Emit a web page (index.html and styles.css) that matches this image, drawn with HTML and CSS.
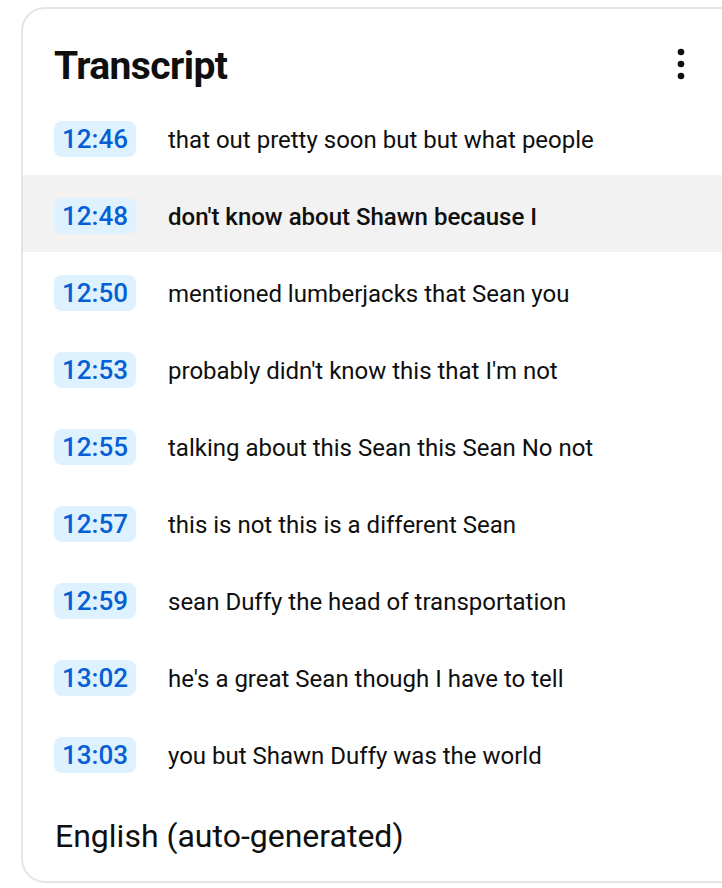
FILE: index.html
```html
<!DOCTYPE html>
<html lang="en">
<head>
    <meta charset="UTF-8">
    <meta name="viewport" content="width=device-width, initial-scale=1.0">
    <link rel="stylesheet" href="styles.css">
    <title>Transcript</title>
</head>
<body>
    <div class="panel">
        <div class="panel-header">
            <h1>Transcript</h1>
            <button class="menu-btn" aria-label="More actions">
                <svg width="12" height="36" viewBox="0 0 12 36">
                    <circle cx="6" cy="6" r="3.3" fill="#0f0f0f"/>
                    <circle cx="6" cy="18" r="3.3" fill="#0f0f0f"/>
                    <circle cx="6" cy="30" r="3.3" fill="#0f0f0f"/>
                </svg>
            </button>
        </div>
        <div class="segments">
            <div class="segment">
                <span class="timestamp">12:46</span>
                <span class="line">that out pretty soon but but what people</span>
            </div>
            <div class="segment active">
                <span class="timestamp">12:48</span>
                <span class="line">don't know about Shawn because I</span>
            </div>
            <div class="segment">
                <span class="timestamp">12:50</span>
                <span class="line">mentioned lumberjacks that Sean you</span>
            </div>
            <div class="segment">
                <span class="timestamp">12:53</span>
                <span class="line">probably didn't know this that I'm not</span>
            </div>
            <div class="segment">
                <span class="timestamp">12:55</span>
                <span class="line">talking about this Sean this Sean No not</span>
            </div>
            <div class="segment">
                <span class="timestamp">12:57</span>
                <span class="line">this is not this is a different Sean</span>
            </div>
            <div class="segment">
                <span class="timestamp">12:59</span>
                <span class="line">sean Duffy the head of transportation</span>
            </div>
            <div class="segment">
                <span class="timestamp">13:02</span>
                <span class="line">he's a great Sean though I have to tell</span>
            </div>
            <div class="segment">
                <span class="timestamp">13:03</span>
                <span class="line">you but Shawn Duffy was the world</span>
            </div>
        </div>
        <div class="panel-footer">English (auto-generated)</div>
    </div>
</body>
</html>
```

FILE: styles.css
```css
body {
    margin: 0;
    background-color: #fff;
    font-family: Roboto, "Liberation Sans", sans-serif;
    color: #0f0f0f;
    overflow: hidden;
}

.panel {
    margin: 7px 0 0 21px;
    width: 740px;
    height: 876px;
    box-sizing: border-box;
    border: 2px solid #e5e5e5;
    border-radius: 24px;
    background-color: #fff;
    display: flex;
    flex-direction: column;
}

.panel-header {
    height: 89px;
    display: flex;
    align-items: flex-start;
    justify-content: space-between;
    padding-left: 31px;
}

h1 {
    margin: 0;
    font-size: 39px;
    font-weight: 700;
    letter-spacing: -0.6px;
    line-height: 46px;
    padding-top: 34px;
}

.menu-btn {
    border: none;
    background: none;
    padding: 0;
    width: 12px;
    height: 36px;
    margin: 37px 72px 0 0;
}

.menu-btn svg {
    display: block;
}

.segment {
    height: 77px;
    box-sizing: border-box;
    padding: 23px 0 0 31px;
    display: flex;
    align-items: flex-start;
    gap: 32px;
}

.segment.active {
    background-color: #f2f2f2;
}

.timestamp {
    display: block;
    width: 82px;
    height: 36px;
    line-height: 36px;
    text-align: center;
    border-radius: 8px;
    background-color: #def1ff;
    color: #065fd4;
    font-size: 26px;
    font-weight: 500;
}

.line {
    font-size: 24px;
    line-height: 38px;
}

.segment.active .line {
    font-weight: 500;
}

.panel-footer {
    padding: 25px 0 0 32px;
    font-size: 32px;
    line-height: 40px;
}
```
